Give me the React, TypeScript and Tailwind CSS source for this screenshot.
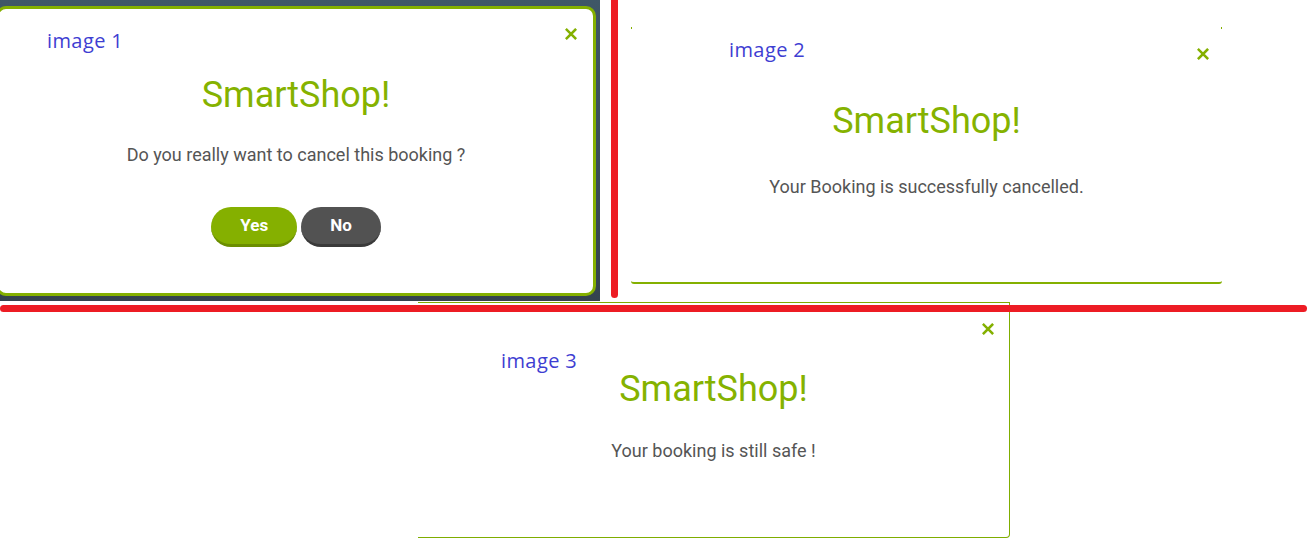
import React from 'react';

const GREEN = '#84b000';

const CloseX = ({ className = '' }: { className?: string }) => (
  <svg className={className} width="12" height="12" viewBox="0 0 12 12" fill="none">
    <path d="M1.8 1.8L10.2 10.2M10.2 1.8L1.8 10.2" stroke={GREEN} strokeWidth="2.6" strokeLinecap="square" />
  </svg>
);

const Label = ({ text, className = '' }: { text: string; className?: string }) => (
  <span className={`absolute font-['Open_Sans',sans-serif] text-[20px] leading-5 tracking-[0.4px] text-[#3e3ed2] ${className}`}>
    {text}
  </span>
);

const Title = () => (
  <h2 className="text-[36px] leading-9 font-normal text-[#85b200]">SmartShop!</h2>
);

const Message = ({ text, className = '' }: { text: string; className?: string }) => (
  <p className={`text-[18px] leading-6 text-[#555555] ${className}`}>{text}</p>
);

const App = () => {
  return (
    <div className="relative h-[551px] w-[1309px] overflow-hidden bg-white font-['Roboto',sans-serif]">
      {/* top row: image 1 and image 2 */}
      <div className="flex items-start">
        <div className="h-[301px] w-[600px] shrink-0 overflow-hidden bg-gradient-to-b from-[#3f5767] to-[#34434f]">
          <div className="relative ml-[-4px] mt-[6px] flex h-[290px] w-[600px] flex-col items-center rounded-[10px] border-[3px] border-[#84b000] bg-white pt-[68px]">
            <Label text="image 1" className="left-[48px] top-[22px]" />
            <CloseX className="absolute right-[16px] top-[19px]" />
            <Title />
            <Message text="Do you really want to cancel this booking ?" className="mt-[30px]" />
            <div className="mt-[40px] flex gap-1">
              <button className="h-10 rounded-full border-b-[3px] border-[#6b8e00] bg-[#85b000] px-[29px] text-[17px] font-bold text-white">
                Yes
              </button>
              <button className="h-10 rounded-full border-b-[3px] border-[#3a3a3a] bg-[#525252] px-[29px] text-[17px] font-bold text-white">
                No
              </button>
            </div>
          </div>
        </div>

        <div className="ml-[11px] h-[298px] w-[7px] shrink-0 rounded-b-full bg-[#ed1c24]" />

        <div className="relative ml-[13px] mt-[27px] flex h-[257px] w-[591px] shrink-0 flex-col items-center rounded-b-[3px] border-b-2 border-[#84b000] bg-white pt-[76px]">
          <span className="absolute left-0 top-0 h-[2px] w-px bg-[#84b000]" />
          <span className="absolute right-0 top-0 h-[2px] w-px bg-[#84b000]" />
          <Label text="image 2" className="left-[98px] top-[13px]" />
          <CloseX className="absolute right-[13px] top-[21px]" />
          <Title />
          <Message text="Your Booking is successfully cancelled." className="mt-[36px]" />
        </div>
      </div>

      {/* bottom row: image 3 */}
      <div className="relative ml-[418px] mt-px flex h-[236px] w-[592px] flex-col items-center rounded-br-[4px] border-b border-r border-t border-[#7fad00] bg-white pt-[68px]">
        <Label text="image 3" className="left-[83px] top-[48px]" />
        <CloseX className="absolute right-[15px] top-[20px]" />
        <Title />
        <Message text="Your booking is still safe !" className="mt-[32px]" />
      </div>

      {/* red annotation line */}
      <div className="absolute left-0 top-[305px] h-[7px] w-[1307px] rounded-full bg-[#ed1c24]" />
    </div>
  );
};

export default App;
